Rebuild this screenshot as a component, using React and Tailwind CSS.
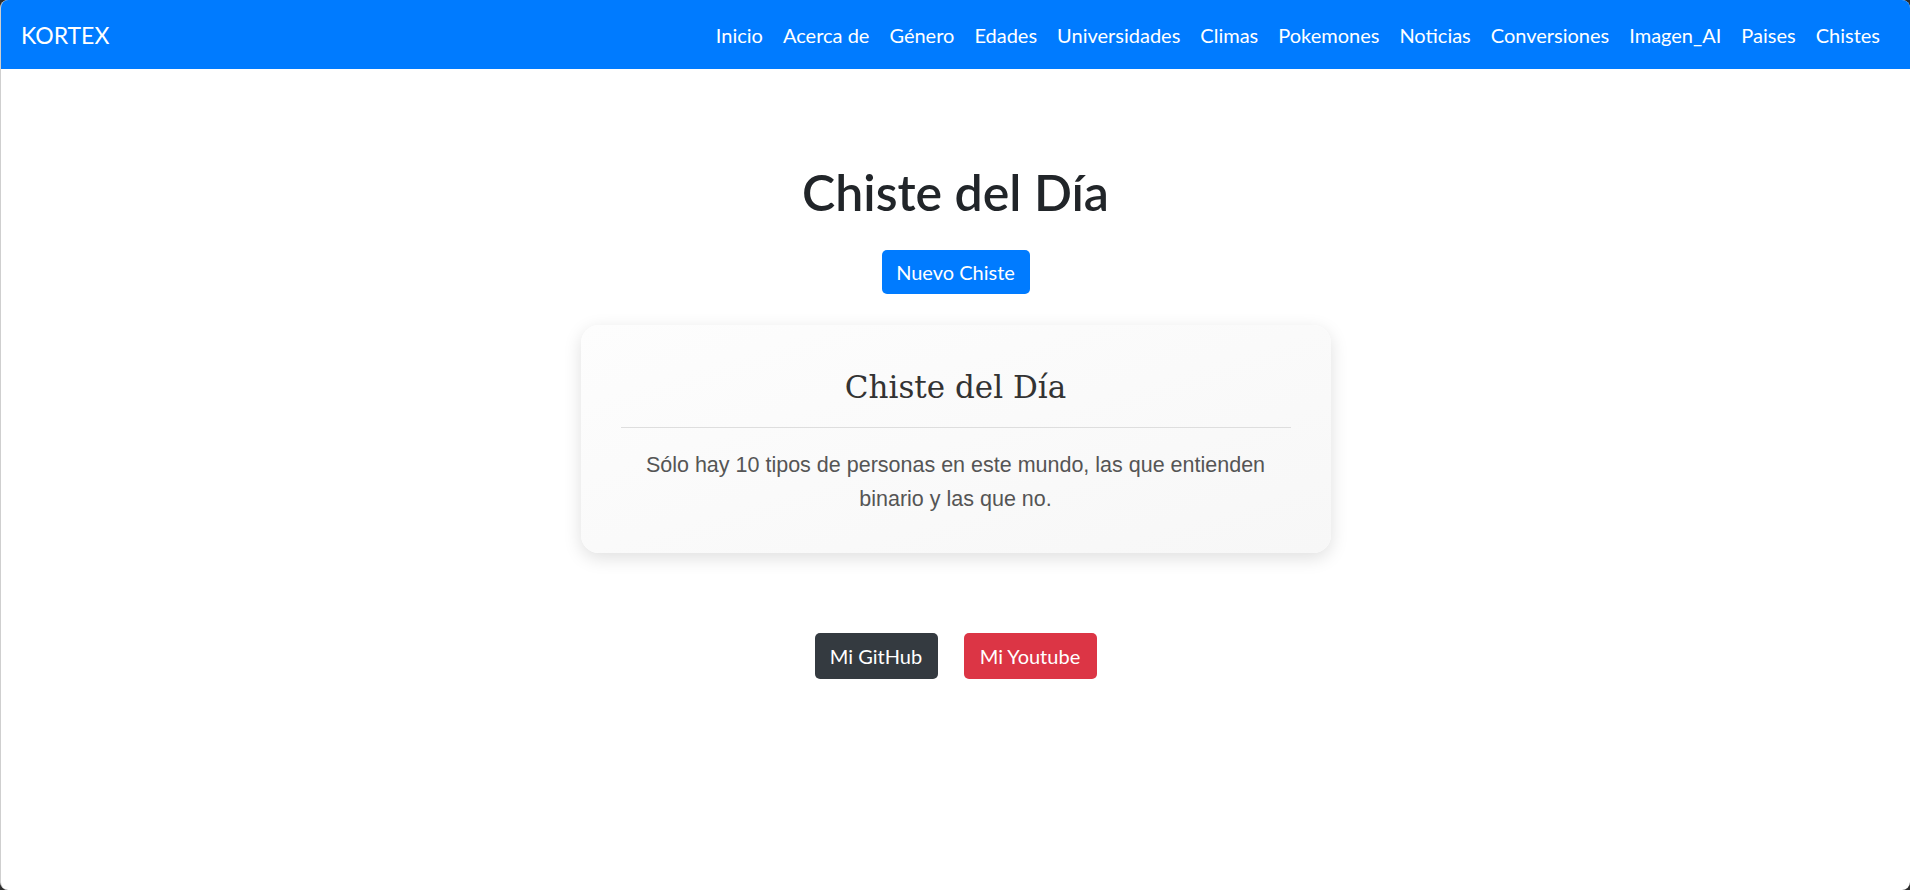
export default function App() {
  const links = ["Inicio", "Acerca de", "Género", "Edades", "Universidades", "Climas", "Pokemones", "Noticias", "Conversiones", "Imagen_AI", "Paises", "Chistes"];
  return (
    <div className="w-[1910px] h-[890px] bg-[#2d2d2d] overflow-hidden">
      <div className="w-full h-full bg-white rounded-[8px] overflow-hidden border-l border-[#cfcfcf] font-['Lato','Noto_Sans',sans-serif]">
        <nav className="h-[69px] bg-[#007bff] flex items-center justify-between pl-[20px] pr-[20px]">
          <a className="text-white text-[23px] leading-[30px]">KORTEX</a>
          <ul className="flex items-center">
            {links.map((l) => (
              <li key={l} className="px-[10px] text-white text-[20px] leading-[30px]">{l}</li>
            ))}
          </ul>
        </nav>
        <main className="flex flex-col items-center">
          <h1 className="mt-[93px] text-[50px] leading-[60px] font-semibold text-[#212529]">Chiste del Día</h1>
          <button className="mt-[28px] w-[148px] h-[44px] rounded-[5px] bg-[#007bff] text-white text-[20px]">Nuevo Chiste</button>
          <div className="mt-[31px] w-[750px] h-[228px] rounded-[18px] bg-gradient-to-br from-[#fdfdfd] to-[#f7f7f7] shadow-[0_5px_18px_rgba(0,0,0,0.13)] px-[40px] pt-[40px] flex flex-col items-center">
            <h2 className="text-[31px] leading-[44px] text-[#333] font-['DejaVu_Serif',serif]">Chiste del Día</h2>
            <div className="w-full h-px bg-[#dedede] mt-[18px]"></div>
            <p className="mt-[20px] text-center text-[21.5px] leading-[34px] text-[#555] font-['Liberation_Sans',Arial,sans-serif] px-[10px]">
              Sólo hay 10 tipos de personas en este mundo, las que entienden binario y las que no.
            </p>
          </div>
          <div className="mt-[80px] flex gap-[26px]">
            <button className="w-[123px] h-[46px] rounded-[5px] bg-[#343a40] text-white text-[20px]">Mi GitHub</button>
            <button className="w-[133px] h-[46px] rounded-[5px] bg-[#dc3545] text-white text-[20px]">Mi Youtube</button>
          </div>
        </main>
      </div>
    </div>
  );
}
